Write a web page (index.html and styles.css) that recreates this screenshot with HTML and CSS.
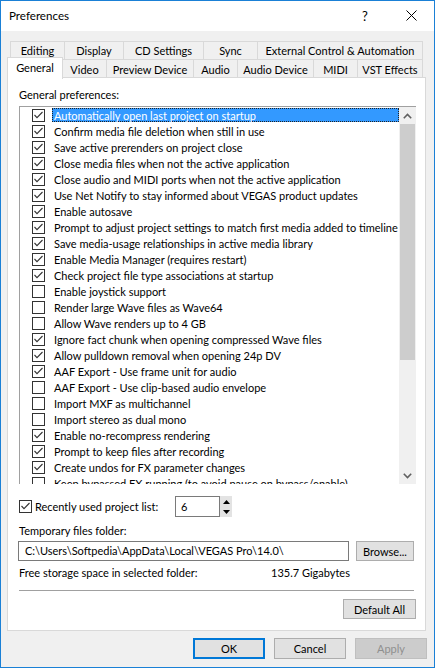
FILE: index.html
```html
<!DOCTYPE html>
<html>
<head>
<meta charset="utf-8">
<title>Preferences</title>
<link rel="stylesheet" href="styles.css">
</head>
<body>
<svg class="defs" width="0" height="0">
  <symbol id="tick" viewBox="0 0 11 11">
    <polyline points="1.5,5 4,7.6 9.5,2" fill="none" stroke="#333" stroke-width="1.1"/>
  </symbol>
</svg>
<div class="window">
  <div class="titlebar">
    <span class="title">Preferences</span>
    <span class="tbtn help">?</span>
    <span class="tbtn close"><svg width="11" height="11" viewBox="0 0 11 11"><path d="M0.5 0.5 L10.5 10.5 M10.5 0.5 L0.5 10.5" stroke="#000" stroke-width="1" fill="none"/></svg></span>
  </div>
  <div class="client">
    <div class="tabs">
      <div class="tabrow row1">
        <div class="tab w-edit">Editing</div>
        <div class="tab w-disp">Display</div>
        <div class="tab w-cd">CD Settings</div>
        <div class="tab w-sync">Sync</div>
        <div class="tab w-ext last">External Control &amp; Automation</div>
      </div>
      <div class="tabrow row2">
        <div class="tab sel w-gen">General</div>
        <div class="tab w-vid">Video</div>
        <div class="tab w-prev">Preview Device</div>
        <div class="tab w-aud">Audio</div>
        <div class="tab w-adev">Audio Device</div>
        <div class="tab w-midi">MIDI</div>
        <div class="tab w-vst last">VST Effects</div>
      </div>
    </div>
    <div class="panel">
      <div class="label">General preferences:</div>
      <div class="list">
        <div class="items">
          <div class="item selected"><span class="cb"><svg class="ck"><use href="#tick"/></svg></span><span class="txt">Automatically open last project on startup</span></div>
          <div class="item"><span class="cb"><svg class="ck"><use href="#tick"/></svg></span><span class="txt">Confirm media file deletion when still in use</span></div>
          <div class="item"><span class="cb"><svg class="ck"><use href="#tick"/></svg></span><span class="txt">Save active prerenders on project close</span></div>
          <div class="item"><span class="cb"><svg class="ck"><use href="#tick"/></svg></span><span class="txt">Close media files when not the active application</span></div>
          <div class="item"><span class="cb"><svg class="ck"><use href="#tick"/></svg></span><span class="txt">Close audio and MIDI ports when not the active application</span></div>
          <div class="item"><span class="cb"><svg class="ck"><use href="#tick"/></svg></span><span class="txt">Use Net Notify to stay informed about VEGAS product updates</span></div>
          <div class="item"><span class="cb"><svg class="ck"><use href="#tick"/></svg></span><span class="txt">Enable autosave</span></div>
          <div class="item"><span class="cb"><svg class="ck"><use href="#tick"/></svg></span><span class="txt">Prompt to adjust project settings to match first media added to timeline</span></div>
          <div class="item"><span class="cb"><svg class="ck"><use href="#tick"/></svg></span><span class="txt">Save media-usage relationships in active media library</span></div>
          <div class="item"><span class="cb"><svg class="ck"><use href="#tick"/></svg></span><span class="txt">Enable Media Manager (requires restart)</span></div>
          <div class="item"><span class="cb"><svg class="ck"><use href="#tick"/></svg></span><span class="txt">Check project file type associations at startup</span></div>
          <div class="item"><span class="cb"></span><span class="txt">Enable joystick support</span></div>
          <div class="item"><span class="cb"></span><span class="txt">Render large Wave files as Wave64</span></div>
          <div class="item"><span class="cb"></span><span class="txt">Allow Wave renders up to 4 GB</span></div>
          <div class="item"><span class="cb"><svg class="ck"><use href="#tick"/></svg></span><span class="txt">Ignore fact chunk when opening compressed Wave files</span></div>
          <div class="item"><span class="cb"><svg class="ck"><use href="#tick"/></svg></span><span class="txt">Allow pulldown removal when opening 24p DV</span></div>
          <div class="item"><span class="cb"><svg class="ck"><use href="#tick"/></svg></span><span class="txt">AAF Export - Use frame unit for audio</span></div>
          <div class="item"><span class="cb"></span><span class="txt">AAF Export - Use clip-based audio envelope</span></div>
          <div class="item"><span class="cb"></span><span class="txt">Import MXF as multichannel</span></div>
          <div class="item"><span class="cb"></span><span class="txt">Import stereo as dual mono</span></div>
          <div class="item"><span class="cb"><svg class="ck"><use href="#tick"/></svg></span><span class="txt">Enable no-recompress rendering</span></div>
          <div class="item"><span class="cb"><svg class="ck"><use href="#tick"/></svg></span><span class="txt">Prompt to keep files after recording</span></div>
          <div class="item"><span class="cb"><svg class="ck"><use href="#tick"/></svg></span><span class="txt">Create undos for FX parameter changes</span></div>
          <div class="item"><span class="cb"></span><span class="txt">Keep bypassed FX running (to avoid pause on bypass/enable)</span></div>
        </div>
        <div class="vscroll">
          <div class="sbtn"><svg width="9" height="6" viewBox="0 0 9 6"><polyline points="0.8,5.2 4.5,1.5 8.2,5.2" fill="none" stroke="#606060" stroke-width="1.6"/></svg></div>
          <div class="thumb"></div>
          <div class="track"></div>
          <div class="sbtn"><svg width="9" height="6" viewBox="0 0 9 6"><polyline points="0.8,0.8 4.5,4.5 8.2,0.8" fill="none" stroke="#606060" stroke-width="1.6"/></svg></div>
        </div>
      </div>
      <div class="recent">
        <div class="recent-label"><span class="cb"><svg class="ck"><use href="#tick"/></svg></span><span class="rtxt">Recently used project list:</span></div>
        <div class="spin-edit">6</div>
        <div class="spinner">
          <svg width="7" height="4" viewBox="0 0 7 4"><polygon points="3.5,0 7,4 0,4" fill="#000"/></svg>
          <svg width="7" height="4" viewBox="0 0 7 4"><polygon points="0,0 7,0 3.5,4" fill="#000"/></svg>
        </div>
      </div>
      <div class="label temp">Temporary files folder:</div>
      <div class="path-row">
        <div class="path">C:\Users\Softpedia\AppData\Local\VEGAS Pro\14.0\</div>
        <div class="btn browse">Browse...</div>
      </div>
      <div class="free">
        <span class="free-label">Free storage space in selected folder:</span>
        <span>135.7 Gigabytes</span>
      </div>
      <div class="sep"></div>
      <div class="def-row"><div class="btn defall">Default All</div></div>
    </div>
    <div class="buttons">
      <div class="btn dlg ok">OK</div>
      <div class="btn dlg">Cancel</div>
      <div class="btn dlg disabled">Apply</div>
    </div>
  </div>
</div>
</body>
</html>
```

FILE: styles.css
```css
* { box-sizing: border-box; }
html, body { margin: 0; padding: 0; }
body {
  font-family: Lato, "Liberation Sans", sans-serif;
  font-size: 11px;
  color: #000;
  background: #fff;
}
.defs { position: absolute; width: 0; height: 0; }

.window {
  width: 435px;
  height: 668px;
  border: 1px solid #1a80d6;
  background: #f0f0f0;
  display: flex;
  flex-direction: column;
}
.titlebar {
  height: 30px;
  flex: none;
  background: #fff;
  display: flex;
  align-items: center;
  padding-left: 8px;
  padding-bottom: 1px;
}
.title { flex: 1; font-size: 11.6px; }
.tbtn {
  width: 46px;
  height: 29px;
  display: flex;
  align-items: center;
  justify-content: center;
}
.help { font-size: 13px; }

.client {
  flex: 1;
  display: flex;
  flex-direction: column;
  padding-top: 10px;
}
.tabs { margin-left: 9px; }
.tabrow {
  display: flex;
  height: 18px;
  align-items: flex-start;
}
.tab {
  height: 18px;
  border-top: 1px solid #d9d9d9;
  border-left: 1px solid #d9d9d9;
  display: flex;
  align-items: center;
  justify-content: center;
  white-space: nowrap;
  background: #f0f0f0;
  flex: none;
}
.tab.last { border-right: 1px solid #d9d9d9; }
.row2 .tab { height: 19px; }
.tab.sel {
  position: relative;
  z-index: 2;
  background: #fff;
  height: 22px;
  margin: -2px -1px 0 -3px;
  border-right: 1px solid #d9d9d9;
  padding-bottom: 3px;
}
.w-edit { width: 54px; }
.w-disp { width: 59px; }
.w-cd { width: 80px; }
.w-sync { width: 54px; }
.w-ext { width: 166px; }
.w-gen { width: 56px; }
.w-vid { width: 44px; }
.w-prev { width: 87px; }
.w-aud { width: 44px; }
.w-adev { width: 76px; }
.w-midi { width: 44px; }
.w-vst { width: 66px; }

.panel {
  margin-left: 6px;
  width: 419px;
  height: 554px;
  flex: none;
  background: #fff;
  border: 1px solid #d9d9d9;
  padding: 9px 9px 0 11px;
  display: flex;
  flex-direction: column;
}
.label { line-height: 16px; height: 16px; }
.list {
  margin-top: 3px;
  width: 397px;
  height: 378px;
  border-top: 1px solid #a0a0a0;
  border-left: 1px solid #a0a0a0;
  display: flex;
  flex: none;
}
.items { flex: 1; overflow: hidden; }
.item {
  height: 16px;
  display: flex;
  align-items: center;
  padding-left: 12px;
  white-space: nowrap;
}
.cb {
  width: 13px;
  height: 13px;
  flex: none;
  border: 1px solid #333;
  background: #fff;
  display: block;
}
.ck { width: 11px; height: 11px; display: block; }
.txt {
  margin-left: 7px;
  padding: 0 1px;
  height: 14px;
  line-height: 13px;
  border: 1px solid transparent;
  flex: 1;
}
.selected .txt {
  background: #3399ff;
  color: #fff;
  border: 1px dotted #222;
}
.vscroll {
  width: 17px;
  flex: none;
  background: #f0f0f0;
  display: flex;
  flex-direction: column;
}
.sbtn {
  height: 17px;
  flex: none;
  display: flex;
  align-items: center;
  justify-content: center;
}
.thumb {
  height: 236px;
  flex: none;
  margin: 0 1px;
  background: #cdcdcd;
}
.track { flex: 1; }

.recent {
  margin-top: 12px;
  height: 21px;
  display: flex;
  align-items: center;
  flex: none;
}
.recent-label {
  width: 156px;
  display: flex;
  align-items: center;
}
.rtxt { margin-left: 3px; }
.spin-edit {
  width: 45px;
  height: 21px;
  border: 1px solid #7a7a7a;
  padding-left: 5px;
  line-height: 19px;
}
.spinner {
  width: 12px;
  height: 21px;
  background: #e3e3e3;
  display: flex;
  flex-direction: column;
  justify-content: space-between;
  align-items: center;
  padding: 4px 0 3px;
}
.spinner svg { display: block; }
.temp { margin-top: 6px; }
.path-row {
  margin-top: 2px;
  height: 20px;
  display: flex;
  flex: none;
}
.path {
  margin-left: -1px;
  width: 331px;
  height: 20px;
  border: 1px solid #7a7a7a;
  padding-left: 6px;
  line-height: 18px;
  white-space: nowrap;
}
.btn {
  height: 20px;
  background: #e1e1e1;
  border: 1px solid #adadad;
  display: flex;
  align-items: center;
  justify-content: center;
  flex: none;
}
.browse { margin-left: 7px; width: 58px; }
.free {
  margin-top: 4px;
  height: 16px;
  line-height: 16px;
  display: flex;
}
.free-label { width: 252px; }
.sep {
  margin-top: 9px;
  width: 395px;
  height: 1px;
  background: #a0a0a0;
  flex: none;
}
.def-row {
  margin-top: 8px;
  display: flex;
  justify-content: flex-end;
}
.defall { width: 73px; }

.buttons {
  margin-top: 7px;
  display: flex;
  justify-content: flex-end;
  gap: 9px;
  padding-right: 7px;
}
.btn.dlg { width: 72px; height: 21px; }
.btn.ok { border: 2px solid #0078d7; }
.btn.disabled {
  background: #cccccc;
  border-color: #bfbfbf;
  color: #8f8f8f;
}
```
